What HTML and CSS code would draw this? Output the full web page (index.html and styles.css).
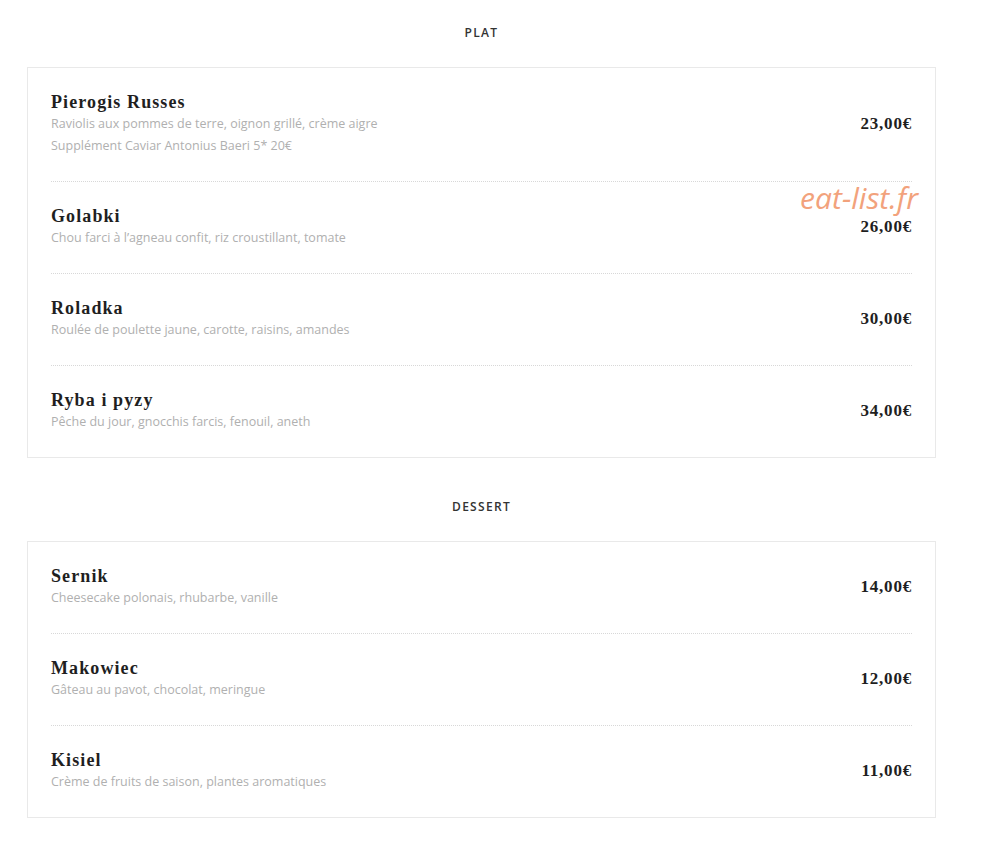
FILE: index.html
```html
<!DOCTYPE html>
<html lang="fr">
<head>
<meta charset="utf-8">
<title>Menu</title>
<link rel="stylesheet" href="styles.css">
</head>
<body>
<main class="menu">
  <section class="section">
    <h2 class="section-title">PLAT</h2>
    <div class="card">
      <div class="item">
        <div class="item-text">
          <h3 class="item-name">Pierogis Russes</h3>
          <p class="item-desc">Raviolis aux pommes de terre, oignon grillé, crème aigre</p>
          <p class="item-desc">Supplément Caviar Antonius Baeri 5* 20€</p>
        </div>
        <div class="item-price">23,00€</div>
      </div>
      <div class="item">
        <div class="item-text">
          <h3 class="item-name">Golabki</h3>
          <p class="item-desc">Chou farci à l’agneau confit, riz croustillant, tomate</p>
        </div>
        <div class="item-price">26,00€</div>
      </div>
      <div class="item">
        <div class="item-text">
          <h3 class="item-name">Roladka</h3>
          <p class="item-desc">Roulée de poulette jaune, carotte, raisins, amandes</p>
        </div>
        <div class="item-price">30,00€</div>
      </div>
      <div class="item">
        <div class="item-text">
          <h3 class="item-name">Ryba i pyzy</h3>
          <p class="item-desc">Pêche du jour, gnocchis farcis, fenouil, aneth</p>
        </div>
        <div class="item-price">34,00€</div>
      </div>
      <span class="watermark">eat-list.fr</span>
    </div>
  </section>
  <section class="section">
    <h2 class="section-title">DESSERT</h2>
    <div class="card">
      <div class="item">
        <div class="item-text">
          <h3 class="item-name">Sernik</h3>
          <p class="item-desc">Cheesecake polonais, rhubarbe, vanille</p>
        </div>
        <div class="item-price">14,00€</div>
      </div>
      <div class="item">
        <div class="item-text">
          <h3 class="item-name">Makowiec</h3>
          <p class="item-desc">Gâteau au pavot, chocolat, meringue</p>
        </div>
        <div class="item-price">12,00€</div>
      </div>
      <div class="item">
        <div class="item-text">
          <h3 class="item-name">Kisiel</h3>
          <p class="item-desc">Crème de fruits de saison, plantes aromatiques</p>
        </div>
        <div class="item-price">11,00€</div>
      </div>
    </div>
  </section>
</main>
</body>
</html>
```

FILE: styles.css
```css
* { box-sizing: border-box; }
html, body { margin: 0; padding: 0; background: #fff; }
body { font-family: "Open Sans", sans-serif; color: #222; }

.menu {
  width: 909px;
  margin-left: 27px;
  padding-top: 23px;
}

.section + .section { margin-top: 39px; }

.section-title {
  margin: 0 0 24px;
  text-align: center;
  font-family: "Open Sans", sans-serif;
  font-weight: 600;
  font-size: 12px;
  line-height: 20px;
  letter-spacing: 1.3px;
  color: #333;
}

.card {
  position: relative;
  border: 1px solid #e9e9e9;
  padding: 0 23px;
}

.item {
  display: flex;
  align-items: center;
  justify-content: space-between;
  padding: 23px 0 24px;
  border-bottom: 1px dotted #d8d8d8;
}
.item:last-of-type { border-bottom: none; }

.item-name {
  margin: 0;
  font-family: "Liberation Serif", serif;
  font-weight: 700;
  font-size: 18px;
  line-height: 22px;
  letter-spacing: 1.1px;
  color: #1f1f1f;
}

.item-desc {
  margin: 0;
  font-family: "Open Sans", sans-serif;
  font-size: 12.5px;
  line-height: 22px;
  color: #b0b0b0;
}

.item-price {
  font-family: "Liberation Serif", serif;
  font-weight: 700;
  font-size: 17px;
  letter-spacing: 0.8px;
  color: #1f1f1f;
}

.watermark {
  position: absolute;
  right: 17px;
  top: 113px;
  font-family: "Open Sans", sans-serif;
  font-style: italic;
  font-size: 30px;
  line-height: 34px;
  color: #f2a27c;
}
```
